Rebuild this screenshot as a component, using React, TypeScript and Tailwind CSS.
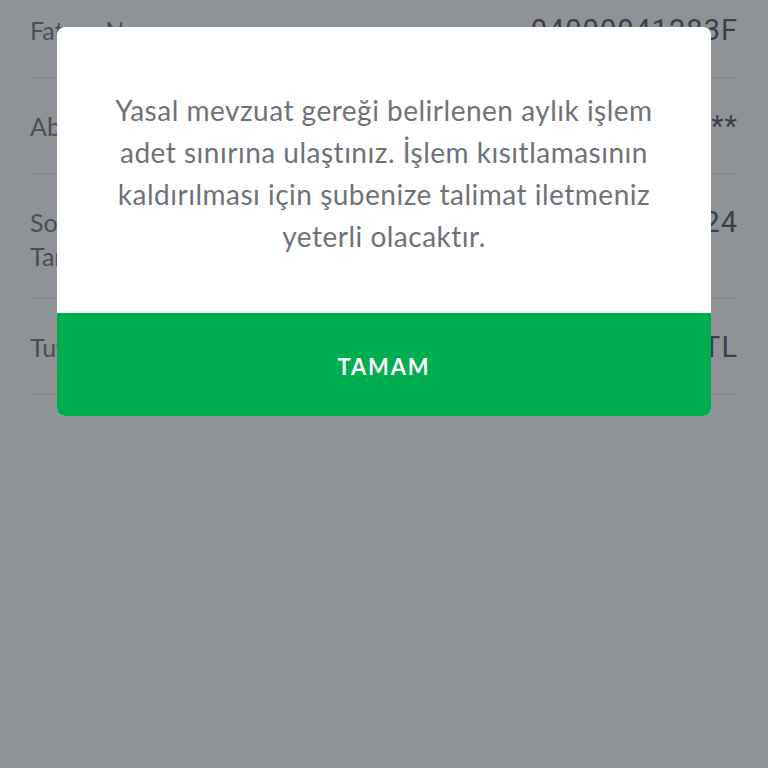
import React from "react";

type Row = { label: React.ReactNode; value: string; pad: string };

const rows: Row[] = [
  { label: "Fatura No", value: "04000041283F", pad: "pt-[31px] pb-[30px]" },
  { label: "Abone No", value: "5*** **** ****", pad: "pt-[31px] pb-[30px]" },
  {
    label: (
      <>
        Son Ödeme
        <br />
        Tarihi
      </>
    ),
    value: "15.01.2024",
    pad: "pt-[31px] pb-[25px]",
  },
  { label: "Tutar", value: "245,60 TL", pad: "pt-[31px] pb-[30px]" },
];

function DetailRow({ row }: { row: Row }) {
  return (
    <div className={`flex items-start justify-between border-b border-[#84888d] ${row.pad}`}>
      <span className="text-[25px] leading-[34px] text-[#4b4f55] font-['Lato',sans-serif]">
        {row.label}
      </span>
      <span className="text-[29px] leading-[34px] tracking-[1px] text-[#3c4046] font-['Roboto',sans-serif]">
        {row.value}
      </span>
    </div>
  );
}

export default function App() {
  return (
    <div className="relative h-[768px] w-[768px] overflow-hidden bg-[#8f9398]">
      {/* page behind the dim overlay */}
      <div className="-mt-[18px] px-[30px]">
        {rows.map((row, i) => (
          <DetailRow key={i} row={row} />
        ))}
      </div>

      {/* alert dialog */}
      <div className="absolute left-[57px] top-[27px] w-[654px] overflow-hidden rounded-[8px] bg-white">
        <div className="flex h-[286px] items-center justify-center px-6 pt-[6px]">
          <p className="text-center text-[28px] leading-[42px] tracking-[0.5px] text-[#6e7277] font-['Lato',sans-serif]">
            Yasal mevzuat gereği belirlenen aylık işlem
            <br />
            adet sınırına ulaştınız. İşlem kısıtlamasının
            <br />
            kaldırılması için şubenize talimat iletmeniz
            <br />
            yeterli olacaktır.
          </p>
        </div>
        <button className="flex h-[103px] w-full items-center justify-center bg-[#00ad4f] pt-[3px] text-[22px] font-bold tracking-[1.8px] text-white font-['Lato',sans-serif]">
          TAMAM
        </button>
      </div>
    </div>
  );
}
